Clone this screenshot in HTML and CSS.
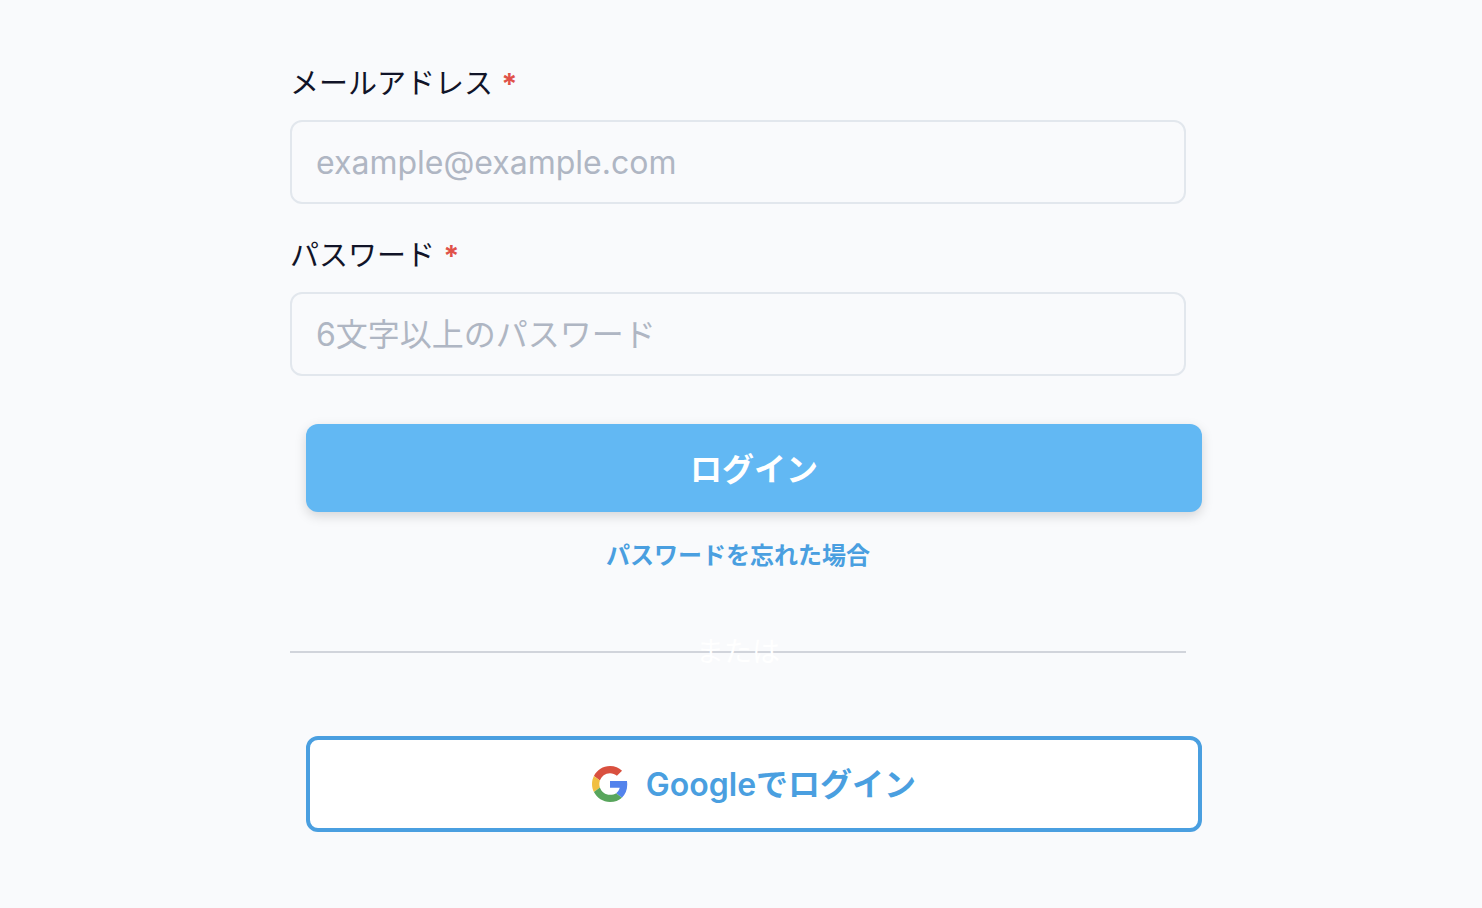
FILE: index.html
```html
<!DOCTYPE html>
<html lang="ja">
<head>
    <meta charset="UTF-8">
    <meta name="viewport" content="width=device-width, initial-scale=1.0">
    <title>ログイン</title>
    <link rel="stylesheet" href="styles.css">
</head>
<body>
    <main class="login">
        <form class="login-form">
            <div class="field">
                <label for="email">メールアドレス <span class="required">*</span></label>
                <input type="email" id="email" name="email" placeholder="example@example.com">
            </div>
            <div class="field">
                <label for="password">パスワード <span class="required">*</span></label>
                <input type="password" id="password" name="password" placeholder="6文字以上のパスワード">
            </div>
            <button type="submit" class="button primary">ログイン</button>
        </form>

        <a class="forgot" href="#">パスワードを忘れた場合</a>

        <!-- 区切り線 -->
        <div class="divider"><span>または</span></div>

        <button type="button" class="button google">
            <svg class="google-icon" viewBox="0 0 48 48" aria-hidden="true">
                <path fill="#d9503f" d="M24 9.5c3.54 0 6.71 1.22 9.21 3.6l6.85-6.85C35.9 2.38 30.47 0 24 0 14.62 0 6.51 5.38 2.56 13.22l7.98 6.19C12.43 13.72 17.74 9.5 24 9.5z"/>
                <path fill="#5383ec" d="M46.98 24.55c0-1.57-.15-3.09-.38-4.55H24v9.02h12.94c-.58 2.96-2.26 5.48-4.78 7.18l7.73 6c4.51-4.18 7.09-10.36 7.09-17.65z"/>
                <path fill="#f1bf42" d="M10.53 28.59c-.48-1.45-.76-2.99-.76-4.59s.27-3.14.76-4.59l-7.98-6.19C.92 16.46 0 20.12 0 24c0 3.88.92 7.54 2.56 10.78l7.97-6.19z"/>
                <path fill="#58a55c" d="M24 48c6.48 0 11.93-2.13 15.89-5.81l-7.73-6c-2.15 1.45-4.92 2.3-8.16 2.3-6.26 0-11.57-4.22-13.47-9.91l-7.98 6.19C6.51 42.62 14.62 48 24 48z"/>
            </svg>
            <span class="button-text">Googleでログイン</span>
        </button>
    </main>
</body>
</html>
```
FILE: styles.css
```css
* {
    box-sizing: border-box;
}

body {
    margin: 0;
    padding: 64px 38px 76px 32px;
    min-height: 100vh;
    background-color: #f9fafc;
    color: #111428;
    font-family: Inter, 'Noto Sans CJK JP', sans-serif;
}

.login {
    max-width: 896px;
    margin: 0 auto;
    display: flex;
    flex-direction: column;
}

.login-form {
    display: flex;
    flex-direction: column;
}

.field {
    margin-bottom: 32px;
}

.field label {
    display: block;
    margin-bottom: 16px;
    font-size: 29px;
    line-height: 40px;
}

.required {
    color: #e05249;
    font-weight: 700;
}

.field input {
    display: block;
    width: 100%;
    height: 84px;
    padding: 0 24px;
    border: 2px solid #e2e7ed;
    border-radius: 12px;
    background: transparent;
    color: inherit;
    font-family: inherit;
    font-size: 32px;
}

.field input::placeholder {
    color: #afb6c3;
    opacity: 1;
}

.button {
    width: 100%;
    margin-left: 16px;
    border-radius: 12px;
    font-family: inherit;
    font-size: 32px;
    font-weight: 600;
    cursor: pointer;
}

.primary {
    height: 88px;
    margin-top: 16px;
    padding-bottom: 4px;
    border: none;
    background-color: #62b8f3;
    color: #fff;
    box-shadow: 0 4px 12px rgba(0, 0, 0, 0.15);
}

.forgot {
    align-self: center;
    margin-top: 26px;
    color: #4a9fe0;
    font-size: 24px;
    font-weight: 600;
    line-height: 36px;
    text-decoration: none;
}

.divider {
    display: grid;
    align-items: center;
    margin: 58px 0 64px;
    text-align: center;
}

/* 線と文字を同じセルに重ねる */
.divider::before,
.divider span {
    grid-area: 1 / 1;
}

.divider::before {
    content: "";
    height: 2px;
    background-color: #d1d4db;
}

.divider span {
    color: #fff;
    font-size: 28px;
    line-height: 40px;
}

.google {
    display: flex;
    align-items: center;
    justify-content: center;
    gap: 18px;
    height: 96px;
    border: 4px solid #4a9fe0;
    background-color: #fff;
    color: #4a9fe0;
}

.button-text {
    padding-bottom: 4px;
}

.google-icon {
    width: 36px;
    height: 36px;
}
```
